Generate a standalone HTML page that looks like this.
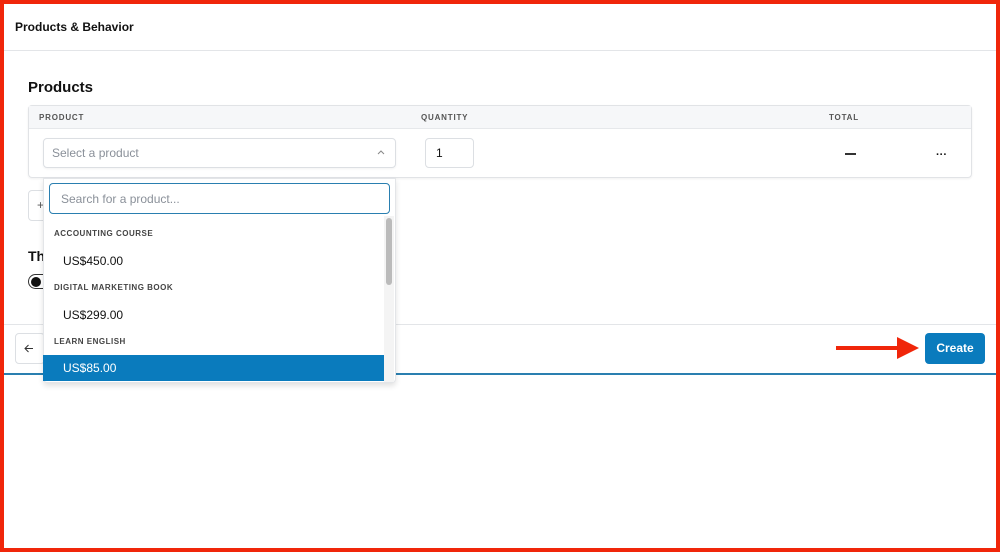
<!DOCTYPE html>
<html><head><style>
*{box-sizing:border-box;margin:0;padding:0}
body{width:1000px;height:552px;position:relative;font-family:"Liberation Sans",sans-serif;background:#fff;overflow:hidden;color:#111}
.a{position:absolute}
.frame{left:0;top:0;width:1000px;height:552px;border:4px solid #f0260a;z-index:10;pointer-events:none}
.cap{font-size:8px;letter-spacing:.8px;color:#555;font-weight:bold}
</style></head><body>
<div class="a frame"></div>
<div class="a" style="left:15px;top:20px;font-size:12px;font-weight:bold">Products &amp; Behavior</div>
<div class="a" style="left:4px;top:50px;width:992px;height:1px;background:#e3e5e8"></div>
<div class="a" style="left:28px;top:79px;font-size:15px;font-weight:bold">Products</div>
<div class="a" style="left:28px;top:105px;width:944px;height:73px;border:1px solid #e1e3e6;border-radius:4px;box-shadow:0 1px 2px rgba(0,0,0,.06)"></div>
<div class="a" style="left:29px;top:106px;width:942px;height:23px;background:#f6f7f9;border-bottom:1px solid #e6e8eb"></div>
<div class="a cap" style="left:39px;top:113px">PRODUCT</div>
<div class="a cap" style="left:421px;top:113px">QUANTITY</div>
<div class="a cap" style="left:829px;top:113px">TOTAL</div>
<div class="a" style="left:43px;top:138px;width:353px;height:30px;border:1px solid #dcdfe3;border-radius:4px;box-shadow:0 1px 2px rgba(0,0,0,.05)"></div>
<div class="a" style="left:52px;top:146px;font-size:12px;color:#8a9099">Select a product</div>
<svg class="a" style="left:377px;top:149px" width="8" height="6"><path d="M1 5L4 2L7 5" stroke="#888" fill="none" stroke-width="1"/></svg>
<div class="a" style="left:425px;top:138px;width:49px;height:30px;border:1px solid #dcdfe3;border-radius:4px"></div>
<div class="a" style="left:436px;top:146px;font-size:12px">1</div>
<div class="a" style="left:845px;top:153px;width:11px;height:2px;background:#333"></div>
<div class="a" style="left:936px;top:149px;font-size:11px;font-weight:bold">···</div>
<div class="a" style="left:28px;top:190px;width:30px;height:31px;border:1px solid #dcdfe3;border-radius:4px"></div>
<div class="a" style="left:37px;top:198px;font-size:12px;color:#555">+</div>
<div class="a" style="left:28px;top:248px;font-size:14px;font-weight:bold">Th</div>
<div class="a" style="left:28px;top:274px;width:26px;height:15px;border:1.5px solid #333;border-radius:8px"></div>
<div class="a" style="left:31px;top:277px;width:10px;height:10px;background:#111;border-radius:50%"></div>
<div class="a" style="left:4px;top:324px;width:992px;height:1px;background:#e3e5e8"></div>
<div class="a" style="left:15px;top:333px;width:30px;height:31px;border:1px solid #dcdfe3;border-radius:4px"></div>
<svg class="a" style="left:24px;top:344px" width="10" height="9"><path d="M9 4.5H1M4.5 1L1 4.5L4.5 8" stroke="#333" fill="none" stroke-width="1"/></svg>
<div class="a" style="left:4px;top:373px;width:992px;height:2px;background:#2a7fb0"></div>
<div class="a" style="left:925px;top:333px;width:60px;height:31px;background:#0a7bbd;border-radius:4px;color:#fff;font-size:12px;font-weight:bold;text-align:center;line-height:31px">Create</div>
<div class="a" style="left:836px;top:346px;width:65px;height:4px;background:#f0260a"></div>
<svg class="a" style="left:897px;top:337px" width="24" height="22"><path d="M0 0L22 11L0 22Z" fill="#f0260a"/></svg>
<div class="a" style="left:43px;top:178px;width:353px;height:205px;background:#fff;border:1px solid #e3e5e8;border-radius:0 0 4px 4px;box-shadow:0 3px 6px rgba(0,0,0,.12)"></div>
<div class="a" style="left:49px;top:183px;width:341px;height:31px;border:1.5px solid #2a7fb0;border-radius:4px"></div>
<div class="a" style="left:61px;top:192px;font-size:12px;color:#8a9099">Search for a product...</div>
<div class="a" style="left:384px;top:216px;width:10px;height:166px;background:#f4f4f4"></div>
<div class="a" style="left:386px;top:218px;width:6px;height:67px;background:#bbb;border-radius:3px"></div>
<div class="a cap" style="left:54px;top:229px;color:#444;letter-spacing:.5px">ACCOUNTING COURSE</div>
<div class="a" style="left:63px;top:254px;font-size:12px">US$450.00</div>
<div class="a cap" style="left:54px;top:283px;color:#444;letter-spacing:.5px">DIGITAL MARKETING BOOK</div>
<div class="a" style="left:63px;top:308px;font-size:12px">US$299.00</div>
<div class="a cap" style="left:54px;top:337px;color:#444;letter-spacing:.5px">LEARN ENGLISH</div>
<div class="a" style="left:43px;top:355px;width:341px;height:26px;background:#0a7bbd"></div>
<div class="a" style="left:63px;top:361px;font-size:12px;color:#fff">US$85.00</div>
</body></html>
